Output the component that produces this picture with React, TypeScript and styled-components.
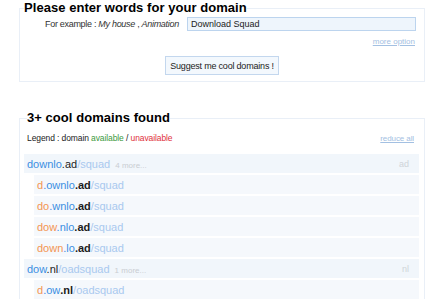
import React from 'react'
import styled, { createGlobalStyle } from 'styled-components'

const GlobalStyle = createGlobalStyle`
  html, body {
    margin: 0;
    padding: 0;
    background: #fff;
  }
  body {
    font-family: "Liberation Sans", Arial, sans-serif;
    color: #222;
  }
`

const Page = styled.div`
  padding: 0 15px 0 19px;
  width: 440px;
  box-sizing: border-box;
  overflow: hidden;
  height: 299px;
`

const Panel = styled.fieldset<{ $gap?: number }>`
  margin: ${p => p.$gap || 0}px 0 0 0;
  padding: 0 0 6px;
  border: 1px solid #e9eff7;
  min-width: 0;
`

const Heading = styled.legend<{ $indent: number }>`
  margin-left: ${p => p.$indent}px;
  padding: 0;
  font: bold 13px/16px "Liberation Sans", Arial, sans-serif;
  color: #000;
  letter-spacing: 0.05px;
`

const ExampleRow = styled.div`
  display: flex;
  align-items: center;
  margin-top: 1px;
  padding: 0 8px 0 25px;
  gap: 8px;
`

const ExampleLabel = styled.span`
  font-size: 9px;
  letter-spacing: -0.3px;
  color: #333;
  white-space: nowrap;

  em {
    font-style: italic;
  }
`

const WordsInput = styled.input`
  flex: 1;
  height: 14px;
  box-sizing: border-box;
  padding: 0 3px;
  border: 1px solid #bcd4ee;
  background: #eef5fc;
  font: 9px "Liberation Sans", Arial, sans-serif;
  color: #222;
  outline: none;
`

const LinkRow = styled.div`
  display: flex;
  justify-content: flex-end;
  padding: 0 9px;
  margin-top: 5px;
  height: 10px;
  align-items: center;
`

const SoftLink = styled.a`
  font-size: 8px;
  color: #a3c0e2;
  text-decoration: underline;
  cursor: pointer;
`

const ButtonRow = styled.div`
  display: flex;
  justify-content: center;
  margin-top: 10px;
`

const SuggestButton = styled.button`
  height: 19px;
  padding: 0 4px;
  border: 1px solid #c3d7ee;
  background: #f3f8fd;
  font: 9px "Liberation Sans", Arial, sans-serif;
  letter-spacing: -0.2px;
  color: #222;
`

const LegendRow = styled.div`
  display: flex;
  justify-content: space-between;
  align-items: center;
  padding: 0 10px 0 7px;
  margin-top: 6px;
  height: 12px;
  font-size: 8.5px;
  letter-spacing: -0.1px;
  color: #222;
`

const Available = styled.span<{ $ok: boolean }>`
  color: ${p => (p.$ok ? '#3c9a3c' : '#e0303a')};
`

const DomainList = styled.div`
  display: flex;
  flex-direction: column;
  gap: 2px;
  margin: 10px 5px 0 4px;
`

const DomainRow = styled.div<{ $child?: boolean }>`
  display: flex;
  align-items: center;
  justify-content: space-between;
  height: 19px;
  margin-left: ${p => (p.$child ? 10 : 0)}px;
  padding: 0 10px 0 3px;
  background: ${p => (p.$child ? '#f5f8fc' : '#f1f6fb')};
  font-size: 11px;
  white-space: nowrap;
`

const Part = styled.span<{ $kind: 'pre' | 'name' | 'tld' | 'path'; $strong?: boolean }>`
  color: ${p =>
    ({ pre: '#f39552', name: '#3c8fe2', tld: '#1c1c1c', path: '#a9c9ef' })[p.$kind]};
  font-weight: ${p => (p.$strong ? 'bold' : 'normal')};
`

const More = styled.span`
  margin-left: 5px;
  font-size: 8px;
  color: #c9cdd2;
`

const Ext = styled.span`
  font-size: 9px;
  color: #cfd4d9;
`

type Group = {
  name: string
  tld: string
  path: string
  more: string
  children: [string, string][]
}

const groups: Group[] = [
  {
    name: 'downlo',
    tld: 'ad',
    path: '/squad',
    more: '4 more...',
    children: [
      ['d', 'ownlo'],
      ['do', 'wnlo'],
      ['dow', 'nlo'],
      ['down', 'lo'],
    ],
  },
  {
    name: 'dow',
    tld: 'nl',
    path: '/oadsquad',
    more: '1 more...',
    children: [['d', 'ow']],
  },
]

export default function App() {
  return (
    <Page>
      <GlobalStyle />
      <Panel>
        <Heading $indent={4}>Please enter words for your domain</Heading>
        <ExampleRow>
          <ExampleLabel>
            For example : <em>My house</em> , <em>Animation</em>
          </ExampleLabel>
          <WordsInput defaultValue="Download Squad" />
        </ExampleRow>
        <LinkRow>
          <SoftLink>more option</SoftLink>
        </LinkRow>
        <ButtonRow>
          <SuggestButton>Suggest me cool domains !</SuggestButton>
        </ButtonRow>
      </Panel>

      <Panel $gap={28}>
        <Heading $indent={7}>3+ cool domains found</Heading>
        <LegendRow>
          <span>
            Legend : domain <Available $ok>available</Available> /{' '}
            <Available $ok={false}>unavailable</Available>
          </span>
          <SoftLink>reduce all</SoftLink>
        </LegendRow>
        <DomainList>
          {groups.map(g => (
            <React.Fragment key={g.name + g.tld}>
              <DomainRow>
                <span>
                  <Part $kind="name">{g.name}</Part>
                  <Part $kind="tld">.{g.tld}</Part>
                  <Part $kind="path">{g.path}</Part>
                  <More>{g.more}</More>
                </span>
                <Ext>{g.tld}</Ext>
              </DomainRow>
              {g.children.map(([pre, rest]) => (
                <DomainRow $child key={pre}>
                  <span>
                    <Part $kind="pre">{pre}</Part>
                    <Part $kind="name">.{rest}</Part>
                    <Part $kind="tld" $strong>.{g.tld}</Part>
                    <Part $kind="path">{g.path}</Part>
                  </span>
                </DomainRow>
              ))}
            </React.Fragment>
          ))}
        </DomainList>
      </Panel>
    </Page>
  )
}
